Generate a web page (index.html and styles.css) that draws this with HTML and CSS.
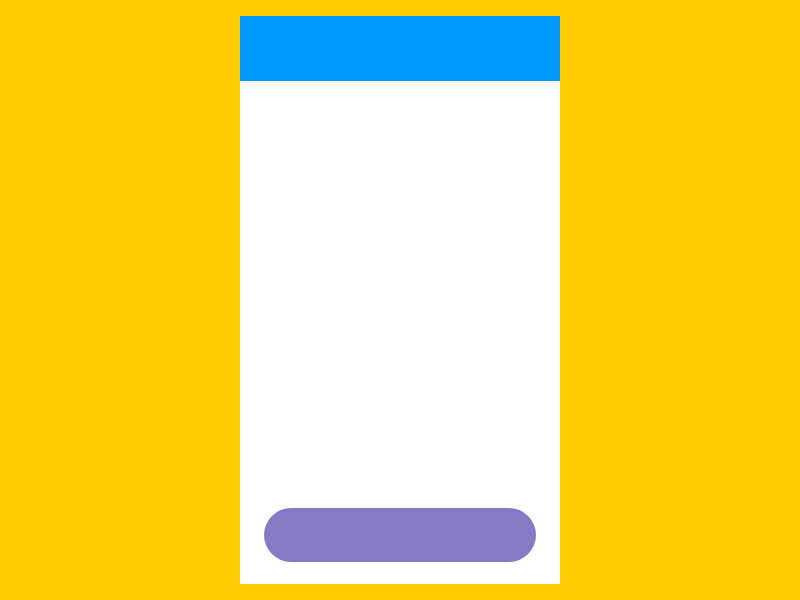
FILE: index.html
```html
<!DOCTYPE html>
<html>
<head>
	<title>screen</title>
	<meta charset="utf-8">
	<link rel="stylesheet" href="styles.css">
</head>
<body>
	<div class="phone">
		<div class="header"></div>
		<div class="content"></div>
		<div class="footer">
			<div class="btn"></div>
		</div>
	</div>
</body>
</html>
```

FILE: styles.css
```css
html, body{
	margin: 0;
	height: 100%;
}

body{
	background-color: #FFCC00;
	font-family: "Liberation Sans", Arial, sans-serif;
	display: flex;
	justify-content: center;
	align-items: flex-start;
	padding-top: 16px;
	box-sizing: border-box;
}

.phone{
	width: 320px;
	height: 568px;
	background-color: #FFF;
	display: flex;
	flex-direction: column;
}

.header{
	height: 65px;
	background-color: #0099FF;
}

.content{
	flex: 1;
}

.footer{
	padding: 0 24px 22px;
}

.btn{
	height: 54px;
	border-radius: 27px;
	background-color: #8679C6;
}
```
